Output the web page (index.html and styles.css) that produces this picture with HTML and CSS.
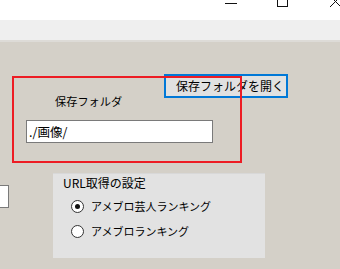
FILE: index.html
```html
<!DOCTYPE html>
<html lang="ja">
<head>
<meta charset="utf-8">
<link rel="stylesheet" href="styles.css">
</head>
<body>
<div class="titlebar">
  <svg class="controls" width="340" height="20" viewBox="0 0 340 20">
    <line x1="225" y1="3.5" x2="237" y2="3.5" stroke="#111" stroke-width="1"/>
    <rect x="277.5" y="-4" width="10" height="10.5" fill="none" stroke="#111" stroke-width="1"/>
    <line x1="330" y1="-4" x2="341" y2="7" stroke="#111" stroke-width="1"/>
    <line x1="341" y1="-4" x2="330" y2="7" stroke="#111" stroke-width="1"/>
  </svg>
</div>
<div class="band"></div>
<div class="canvas">
  <div class="stub"></div>
  <div class="label">保存フォルダ</div>
  <div class="textbox">./画像/</div>
  <button class="openbtn">保存フォルダを開く</button>
  <fieldset class="group">
    <legend>URL取得の設定</legend>
    <label class="radio"><span class="dot on"></span>アメブロ芸人ランキング</label>
    <label class="radio"><span class="dot"></span>アメブロランキング</label>
  </fieldset>
  <div class="redbox"></div>
</div>
</body>
</html>
```
FILE: styles.css
```css
html, body {
  margin: 0;
  padding: 0;
  width: 340px;
  height: 269px;
  overflow: hidden;
  font-family: "Noto Sans CJK JP", "Noto Sans", sans-serif;
  color: #000;
  background: #d4d0c8;
}
.titlebar {
  height: 20px;
  background: #fff;
  position: relative;
}
.controls {
  display: block;
}
.band {
  height: 20px;
  background: #efefef;
  border-bottom: 2px solid #dddbd7;
}
.canvas {
  position: relative;
  height: 227px;
  background: #d4d0c8;
}
.stub {
  position: absolute;
  left: -1px;
  top: 143px;
  width: 8px;
  height: 21px;
  background: #fff;
  border: 1px solid #7a7a7a;
}
.label {
  position: absolute;
  left: 55px;
  top: 50px;
  font-size: 11.2px;
  line-height: 18px;
}
.textbox {
  position: absolute;
  left: 26px;
  top: 78px;
  width: 183px;
  height: 21px;
  padding-left: 2px;
  background: #fff;
  border: 1px solid #7a7a7a;
  font-size: 12.5px;
  line-height: 21px;
}
.openbtn {
  position: absolute;
  left: 164px;
  top: 32px;
  width: 124px;
  height: 24px;
  margin: 0;
  padding: 0 0 0 10px;
  text-align: left;
  background: #e1e1e1;
  border: 2px solid #0078d7;
  font-family: inherit;
  font-size: 12px;
  line-height: 20px;
  color: #000;
}
.group {
  position: absolute;
  left: 53px;
  top: 131px;
  width: 212px;
  height: 85px;
  margin: 0;
  padding: 0;
  box-sizing: border-box;
  background: #e2e2e2;
  border: none;
  border-top: 1px solid #d8d8d8;
}
.group legend {
  position: absolute;
  left: 10px;
  top: 1px;
  padding: 0;
  font-size: 12px;
  line-height: 16px;
  color: #000;
}
.radio {
  position: relative;
  display: flex;
  align-items: center;
  gap: 7px;
  margin-left: 18px;
  height: 18px;
  font-size: 11px;
  line-height: 18px;
}
.radio:first-of-type {
  margin-top: 23px;
}
.radio + .radio {
  margin-top: 7px;
}
.dot {
  width: 11px;
  height: 11px;
  border: 1px solid #333;
  border-radius: 50%;
  background: #fff;
  position: relative;
  flex: none;
}
.dot.on::after {
  content: "";
  position: absolute;
  left: 3px;
  top: 3px;
  width: 5px;
  height: 5px;
  border-radius: 50%;
  background: #111;
}
.redbox {
  position: absolute;
  left: 12px;
  top: 34px;
  width: 226px;
  height: 83px;
  border: 2px solid #ed1c24;
  pointer-events: none;
}
```
